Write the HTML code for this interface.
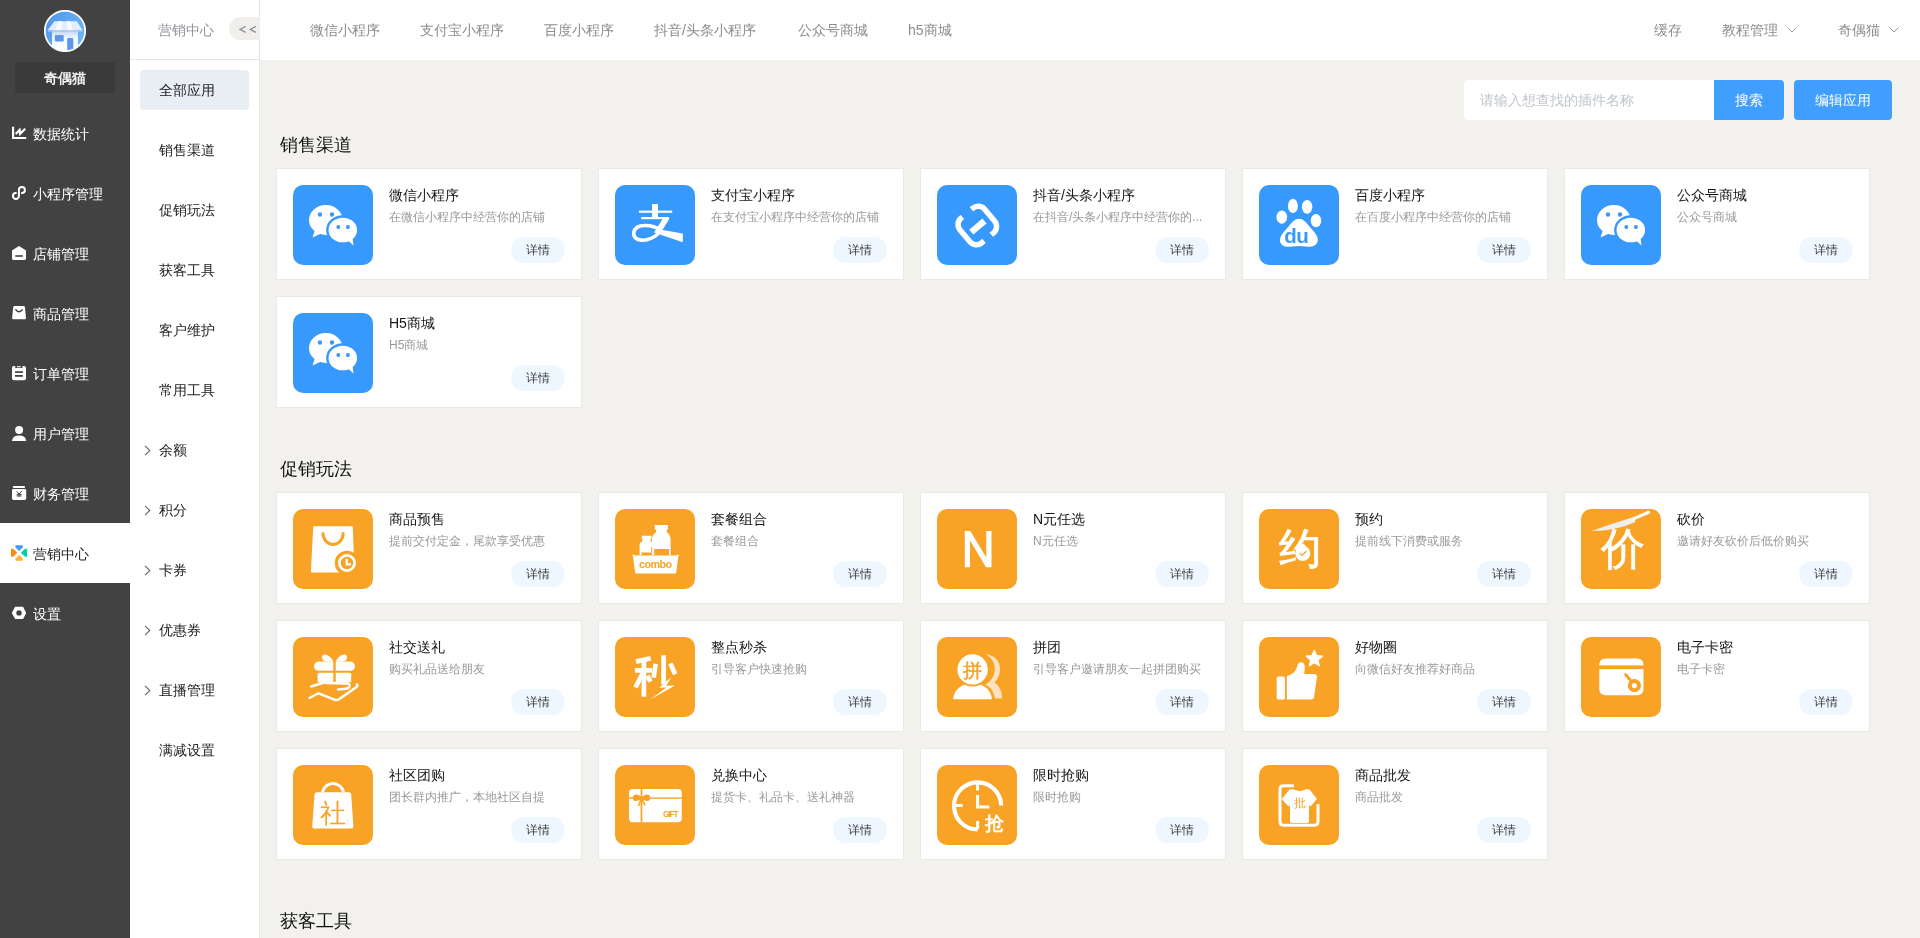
<!DOCTYPE html>
<html><head><meta charset="utf-8"><title>营销中心</title>
<style>
*{box-sizing:border-box;margin:0;padding:0}
html,body{width:1920px;height:938px;overflow:hidden;background:#f2f1ee;font-family:"Liberation Sans",sans-serif;font-size:14px;color:#333}
.abs{position:absolute}
#side1{position:absolute;left:0;top:0;width:130px;height:938px;background:#424242}
#avatar{position:absolute;left:44px;top:10px;width:42px;height:42px}
#uname{position:absolute;left:15px;top:62px;width:100px;height:31px;background:#3a3a3a;border-radius:3px;color:#f0f0f0;font-weight:bold;text-align:center;line-height:33px;font-size:14px}
.n1{position:absolute;left:0;width:130px;height:60px;color:#fff}
.n1.act{background:#fff;color:#222}
.n1i{position:absolute;left:12px;top:23px;width:14px;height:14px}
.n1.act .n1i{left:11px;top:22px}
.n1i svg{display:block}
.n1t{position:absolute;left:33px;top:1px;line-height:60px;font-size:14px;white-space:nowrap}
#side2{position:absolute;left:130px;top:0;width:130px;height:938px;background:#fff;border-right:1px solid #e6e6e6}
#s2head{position:absolute;left:0;top:0;width:129px;height:60px;border-bottom:1px solid #e6e6e6}
#s2title{position:absolute;left:28px;top:0;line-height:60px;color:#909399;font-size:14px}
#collapse{position:absolute;left:99px;top:17px;width:40px;height:23px;border-radius:12px 0 0 12px;background:#f0efec;color:#999;font-size:13px;line-height:23px;padding-left:8px;letter-spacing:3px;font-family:"Liberation Mono",monospace}
#allapp{position:absolute;left:10px;top:70px;width:109px;height:40px;background:#e9edf4;border-radius:4px;line-height:40px;padding-left:19px;color:#222}
.n2{position:absolute;left:0;width:129px;height:20px;line-height:20px;color:#222}
.n2 span{position:absolute;left:29px;top:0;white-space:nowrap}
.n2 .arr{position:absolute;left:14px;top:5px}
#header{position:absolute;left:260px;top:0;width:1660px;height:60px;background:#fff}
.tab{position:absolute;top:0;line-height:60px;color:#8c8c8c;font-size:14px;white-space:nowrap}
.hr{position:absolute;top:0;line-height:60px;color:#8c8c8c;font-size:14px;white-space:nowrap}
.chev{position:absolute;top:27px}
#search{position:absolute;left:1464px;top:80px;width:250px;height:40px;background:#fff;border-radius:4px 0 0 4px;color:#c0c4cc;line-height:40px;padding-left:16px;font-size:14px}
#sbtn{position:absolute;left:1714px;top:80px;width:70px;height:40px;background:#409eff;border-radius:0 4px 4px 0;color:#fff;text-align:center;line-height:40px}
#ebtn{position:absolute;left:1794px;top:80px;width:98px;height:40px;background:#409eff;border-radius:4px;color:#fff;text-align:center;line-height:40px}
.sec{position:absolute;left:280px;font-size:18px;color:#111;line-height:24px;white-space:nowrap}
.card{position:absolute;width:306px;height:112px;background:#fff;border:1px solid #e8e9e9}
.card .ic{position:absolute;left:16px;top:16px;width:80px;height:80px;border-radius:10px;overflow:hidden}
.card .ic svg{display:block}
.card .t{position:absolute;left:112px;top:16px;line-height:20px;font-size:14px;color:#151515;white-space:nowrap}
.card .s{position:absolute;left:112px;top:38px;line-height:20px;font-size:12px;color:#999;white-space:nowrap}
.card .btn{position:absolute;left:234px;top:68px;width:54px;height:26px;border-radius:13px;background:#eef6ff;color:#3a3a3a;font-size:12px;line-height:26px;text-align:center}
</style></head><body><div id="root" style="position:absolute;left:0;top:0;width:1920px;height:938px;will-change:transform">
<div id="side1">
<div id="avatar"><svg width="42" height="42" viewBox="0 0 42 42"><defs><linearGradient id="avg" x1="0" y1="0" x2="1" y2="0.6"><stop offset="0" stop-color="#4f93ee"/><stop offset="1" stop-color="#6cb6f6"/></linearGradient><linearGradient id="bdg" x1="0" y1="0" x2="0" y2="1"><stop offset="0" stop-color="#b9d4f8"/><stop offset="0.35" stop-color="#f3f8ff"/><stop offset="1" stop-color="#ffffff"/></linearGradient><clipPath id="avc"><circle cx="21" cy="21" r="20"/></clipPath></defs>
<circle cx="21" cy="21" r="20.2" fill="url(#avg)"/>
<g clip-path="url(#avc)"><rect x="8" y="20.3" width="26" height="22" fill="url(#bdg)"/>
<path d="M10.4 11.2 H32.8 L38.6 20.3 H3.7 Z" fill="#e3eefd"/>
<path d="M14.5 11.2 H18.6 L17.2 20.3 H11.3 Z M22.5 11.2 H26.6 L28.6 20.3 H23.5 Z" fill="#f7faff"/>
<path d="M3.7 20.3 H38.6 V22 H3.7 Z" fill="#a8c8f5" opacity="0.7"/>
<rect x="10.9" y="25" width="8.8" height="6.4" rx="1.2" fill="#5b97ee"/>
<rect x="23.2" y="28" width="6.1" height="14" rx="1" fill="#5b97ee"/></g>
<circle cx="21" cy="21" r="20.2" fill="none" stroke="#fff" stroke-width="1.7"/></svg></div>
<div id="uname">奇偶猫</div>
<div class="n1" style="top:103px"><span class="n1i"><svg width="14" height="14" viewBox="0 0 14 14" style="overflow:visible"><path d="M1.1 0.8 V12 H14.2" fill="none" stroke="#fff" stroke-width="2.2"/><path d="M3.7 7.9 L7.6 3.9 L8.1 7.8 L13.2 2.7" fill="none" stroke="#fff" stroke-width="2.2" stroke-linejoin="miter"/></svg></span><span class="n1t">数据统计</span></div>
<div class="n1" style="top:163px"><span class="n1i"><svg width="14" height="14" viewBox="0 0 14 14" style="overflow:visible"><path d="M3.9 6.9 A3 3 0 1 0 6.9 9.9 V4 A3 3 0 1 1 9.9 7" fill="none" stroke="#fff" stroke-width="2" stroke-linecap="round"/></svg></span><span class="n1t">小程序管理</span></div>
<div class="n1" style="top:223px"><span class="n1i"><svg width="14" height="14" viewBox="0 0 14 14" style="overflow:visible"><path d="M7 0 L14 4.4 V12.6 Q14 14 12.6 14 H1.4 Q0 14 0 12.6 V4.4 Z" fill="#fff"/><rect x="3.3" y="9.2" width="7.5" height="1.6" fill="#424242"/></svg></span><span class="n1t">店铺管理</span></div>
<div class="n1" style="top:283px"><span class="n1i"><svg width="14" height="14" viewBox="0 0 14 14" style="overflow:visible"><path d="M2.5 0 H11.6 Q12.8 0 12.9 1.2 L14 12 Q14.1 13.2 12.8 13.2 H1.3 Q0 13.2 0.1 12 L1.2 1.2 Q1.3 0 2.5 0 Z" fill="#fff"/><path d="M3.4 3.4 Q7 8.2 10.6 3.4" fill="none" stroke="#424242" stroke-width="1.5"/></svg></span><span class="n1t">商品管理</span></div>
<div class="n1" style="top:343px"><span class="n1i"><svg width="14" height="14" viewBox="0 0 14 14" style="overflow:visible"><rect x="0" y="0" width="14" height="14.3" rx="2" fill="#fff"/><rect x="3.2" y="-0.3" width="7.3" height="2.4" rx="0.6" fill="#424242"/><rect x="4.9" y="0.2" width="3.9" height="1.1" fill="#fff"/><rect x="3" y="5.2" width="7.9" height="1.7" fill="#424242"/><rect x="3" y="9" width="7.9" height="1.8" fill="#424242"/></svg></span><span class="n1t">订单管理</span></div>
<div class="n1" style="top:403px"><span class="n1i"><svg width="14" height="14" viewBox="0 0 14 14" style="overflow:visible"><circle cx="7.1" cy="3.9" r="4" fill="#fff"/><path d="M0 15 Q0.6 9.6 7.1 9.6 Q13.6 9.6 14.2 15 Z" fill="#fff"/></svg></span><span class="n1t">用户管理</span></div>
<div class="n1" style="top:463px"><span class="n1i"><svg width="14" height="14" viewBox="0 0 14 14" style="overflow:visible"><rect x="0.9" y="0" width="12.1" height="2" rx="0.8" fill="#fff"/><rect x="0" y="2.9" width="14.2" height="11.1" rx="1.4" fill="#fff"/><path d="M4.7 5.4 L7.1 8 L9.5 5.4 M7.1 8 V10.9 M4.6 8.3 H9.6 M4.6 9.9 H9.6" fill="none" stroke="#424242" stroke-width="1"/></svg></span><span class="n1t">财务管理</span></div>
<div class="n1 act" style="top:523px"><span class="n1i"><svg width="16" height="16" viewBox="0 0 16 16" style="overflow:visible"><g stroke-linejoin="round" stroke-width="1.5"><path d="M5.1 1 H11.1 V2 L8.1 5.1 L5.1 2 Z" fill="#3d9bfb" stroke="#3d9bfb"/><path d="M0.8 4.6 H1.9 L5.3 7.8 L1.9 11 H0.8 Z" fill="#ff8a00" stroke="#ff8a00"/><path d="M15.4 4.6 H14.3 L10.9 7.8 L14.3 11 H15.4 Z" fill="#00d0a6" stroke="#00d0a6"/><path d="M5.1 15 H11.1 V14 L8.1 10.9 L5.1 14 Z" fill="#ffb13a" stroke="#ffb13a"/></g></svg></span><span class="n1t">营销中心</span></div>
<div class="n1" style="top:583px"><span class="n1i"><svg width="14" height="14" viewBox="0 0 14 14" style="overflow:visible"><path fill-rule="evenodd" d="M3.1 0.8 H11.1 L14.2 6.9 L11.1 12.9 H3.1 L-0.2 6.9 Z M7 4.2 A2.7 2.7 0 1 0 7 9.6 A2.7 2.7 0 1 0 7 4.2 Z" fill="#fff"/></svg></span><span class="n1t">设置</span></div>
</div>
<div id="side2">
<div id="s2head"><div id="s2title">营销中心</div><div id="collapse"><svg width="40" height="23" viewBox="0 0 40 23" style="position:absolute;left:0;top:0"><path d="M16.6 9.4 L11 12.4 L16.6 15.4 M26.8 9.4 L21.2 12.4 L26.8 15.4" fill="none" stroke="#8f9196" stroke-width="1.2"/></svg></div></div>
<div id="allapp">全部应用</div>
<div class="n2" style="top:140px"><span>销售渠道</span></div>
<div class="n2" style="top:200px"><span>促销玩法</span></div>
<div class="n2" style="top:260px"><span>获客工具</span></div>
<div class="n2" style="top:320px"><span>客户维护</span></div>
<div class="n2" style="top:380px"><span>常用工具</span></div>
<div class="n2" style="top:440px"><svg class="arr" width="7" height="11" viewBox="0 0 7 11"><path d="M1 0.8 L5.8 5.5 L1 10.2" fill="none" stroke="#666" stroke-width="1.1"/></svg><span>余额</span></div>
<div class="n2" style="top:500px"><svg class="arr" width="7" height="11" viewBox="0 0 7 11"><path d="M1 0.8 L5.8 5.5 L1 10.2" fill="none" stroke="#666" stroke-width="1.1"/></svg><span>积分</span></div>
<div class="n2" style="top:560px"><svg class="arr" width="7" height="11" viewBox="0 0 7 11"><path d="M1 0.8 L5.8 5.5 L1 10.2" fill="none" stroke="#666" stroke-width="1.1"/></svg><span>卡券</span></div>
<div class="n2" style="top:620px"><svg class="arr" width="7" height="11" viewBox="0 0 7 11"><path d="M1 0.8 L5.8 5.5 L1 10.2" fill="none" stroke="#666" stroke-width="1.1"/></svg><span>优惠券</span></div>
<div class="n2" style="top:680px"><svg class="arr" width="7" height="11" viewBox="0 0 7 11"><path d="M1 0.8 L5.8 5.5 L1 10.2" fill="none" stroke="#666" stroke-width="1.1"/></svg><span>直播管理</span></div>
<div class="n2" style="top:740px"><span>满减设置</span></div>
</div>
<div id="header"></div>
<div class="tab" style="left:310px">微信小程序</div><div class="tab" style="left:420px">支付宝小程序</div><div class="tab" style="left:544px">百度小程序</div><div class="tab" style="left:654px">抖音/头条小程序</div><div class="tab" style="left:798px">公众号商城</div><div class="tab" style="left:908px">h5商城</div>
<div class="hr" style="left:1654px">缓存</div>
<div class="hr" style="left:1722px">教程管理</div>
<svg class="chev" style="left:1787px" width="10" height="6" viewBox="0 0 10 6"><path d="M0.5 0.5 L5 5 L9.5 0.5" fill="none" stroke="#999" stroke-width="1"/></svg>
<div class="hr" style="left:1838px">奇偶猫</div>
<svg class="chev" style="left:1889px" width="10" height="6" viewBox="0 0 10 6"><path d="M0.5 0.5 L5 5 L9.5 0.5" fill="none" stroke="#999" stroke-width="1"/></svg>
<div id="search">请输入想查找的插件名称</div>
<div id="sbtn">搜索</div>
<div id="ebtn">编辑应用</div>
<div class="sec" style="top:133px">销售渠道</div>
<div class="card" style="left:276px;top:168px"><div class="ic" style="background:#3899fd"><svg width="80" height="80" viewBox="0 0 80 80"><ellipse cx="32.8" cy="35" rx="16.8" ry="15" fill="#fff"/><path d="M22 45 L19.5 52.5 L29 48 Z" fill="#fff"/>
<circle cx="27" cy="29.5" r="2.2" fill="#3899fd"/><circle cx="39" cy="29.5" r="2.2" fill="#3899fd"/>
<ellipse cx="49.8" cy="45" rx="15.5" ry="13.5" fill="#fff" stroke="#3899fd" stroke-width="2.4"/><path d="M55 55.5 L60.5 60.5 L59.5 53 Z" fill="#fff"/>
<circle cx="45.3" cy="42" r="2" fill="#3899fd"/><circle cx="54.9" cy="42" r="2" fill="#3899fd"/></svg></div><div class="t">微信小程序</div><div class="s">在微信小程序中经营你的店铺</div><div class="btn">详情</div></div>
<div class="card" style="left:598px;top:168px"><div class="ic" style="background:#3899fd"><svg width="80" height="80" viewBox="0 0 80 80"><g fill="#fff"><rect x="24" y="25.6" width="33.2" height="2.2"/><rect x="37" y="19" width="6" height="13"/><rect x="26.2" y="32" width="27.8" height="2.2"/>
<path d="M48 33.5 H54.5 L45 49 L39 47.5 Z"/><path d="M47.6 44.9 L67.8 48.6 L67.8 57.2 L41.2 48.3 Z"/></g>
<path d="M46 45.5 C38 39.5 20.5 37.5 18.8 47.5 C17.5 56.5 32 58.5 43.5 48.5" fill="none" stroke="#fff" stroke-width="3.6"/></svg></div><div class="t">支付宝小程序</div><div class="s">在支付宝小程序中经营你的店铺</div><div class="btn">详情</div></div>
<div class="card" style="left:920px;top:168px"><div class="ic" style="background:#3899fd"><svg width="80" height="80" viewBox="0 0 80 80"><g transform="translate(40.3 40.5) scale(1.19) translate(-40 -40) rotate(-40 40 40)" fill="none" stroke="#fff" stroke-width="4.6">
<path d="M35 26.5 H33.5 A7 7 0 0 0 26.5 33.5 V46.5 A7 7 0 0 0 33.5 53.5 H36"/>
<path d="M45 26.5 H46.5 A7 7 0 0 1 53.5 33.5 V46.5 A7 7 0 0 1 46.5 53.5 H44"/>
<path d="M32.5 41 H47" stroke-width="5.4"/></g></svg></div><div class="t">抖音/头条小程序</div><div class="s">在抖音/头条小程序中经营你的...</div><div class="btn">详情</div></div>
<div class="card" style="left:1242px;top:168px"><div class="ic" style="background:#3899fd"><svg width="80" height="80" viewBox="0 0 80 80"><g fill="#fff"><ellipse cx="22.8" cy="32.1" rx="5.3" ry="6.6"/><ellipse cx="33.9" cy="20.9" rx="5" ry="7.1"/><ellipse cx="48.1" cy="21.8" rx="5.3" ry="6.9"/><ellipse cx="57" cy="35.6" rx="5.3" ry="6.6"/>
<path d="M40 33.7 C44 33.7 47 37 50 41 C54 46 59 50 58.8 55 C58.6 61 52 62.5 47 61.5 C43 60.8 37 60.8 33 61.5 C27 62.5 21 61 20.9 55 C21 50 26 46 30 41 C33 37 36 33.7 40 33.7 Z"/></g>
<text x="25.2" y="57.5" font-family="Liberation Sans" font-weight="bold" font-size="20.5" fill="#3899fd" letter-spacing="-0.5">du</text></svg></div><div class="t">百度小程序</div><div class="s">在百度小程序中经营你的店铺</div><div class="btn">详情</div></div>
<div class="card" style="left:1564px;top:168px"><div class="ic" style="background:#3899fd"><svg width="80" height="80" viewBox="0 0 80 80"><ellipse cx="32.8" cy="35" rx="16.8" ry="15" fill="#fff"/><path d="M22 45 L19.5 52.5 L29 48 Z" fill="#fff"/>
<circle cx="27" cy="29.5" r="2.2" fill="#3899fd"/><circle cx="39" cy="29.5" r="2.2" fill="#3899fd"/>
<ellipse cx="49.8" cy="45" rx="15.5" ry="13.5" fill="#fff" stroke="#3899fd" stroke-width="2.4"/><path d="M55 55.5 L60.5 60.5 L59.5 53 Z" fill="#fff"/>
<circle cx="45.3" cy="42" r="2" fill="#3899fd"/><circle cx="54.9" cy="42" r="2" fill="#3899fd"/></svg></div><div class="t">公众号商城</div><div class="s">公众号商城</div><div class="btn">详情</div></div>
<div class="card" style="left:276px;top:296px"><div class="ic" style="background:#3899fd"><svg width="80" height="80" viewBox="0 0 80 80"><ellipse cx="32.8" cy="35" rx="16.8" ry="15" fill="#fff"/><path d="M22 45 L19.5 52.5 L29 48 Z" fill="#fff"/>
<circle cx="27" cy="29.5" r="2.2" fill="#3899fd"/><circle cx="39" cy="29.5" r="2.2" fill="#3899fd"/>
<ellipse cx="49.8" cy="45" rx="15.5" ry="13.5" fill="#fff" stroke="#3899fd" stroke-width="2.4"/><path d="M55 55.5 L60.5 60.5 L59.5 53 Z" fill="#fff"/>
<circle cx="45.3" cy="42" r="2" fill="#3899fd"/><circle cx="54.9" cy="42" r="2" fill="#3899fd"/></svg></div><div class="t">H5商城</div><div class="s">H5商城</div><div class="btn">详情</div></div>
<div class="sec" style="top:457px">促销玩法</div>
<div class="card" style="left:276px;top:492px"><div class="ic" style="background:#f8a325"><svg width="80" height="80" viewBox="0 0 80 80"><path d="M21 17.2 H59.2 Q59.8 17.2 59.8 18 L61.4 62.8 Q61.4 63.6 60.6 63.6 H18.7 Q17.9 63.6 17.9 62.8 L20.2 18 Q20.2 17.2 21 17.2 Z" fill="#fff"/>
<path d="M30 24.6 A10.1 10.8 0 0 0 50.2 24.6" fill="none" stroke="#f8a325" stroke-width="3" stroke-linecap="round"/>
<circle cx="54" cy="54" r="12.3" fill="#f8a325"/><circle cx="54" cy="54" r="7.6" fill="none" stroke="#fff" stroke-width="2.8"/>
<path d="M53.8 49.8 V55.4 H58" fill="none" stroke="#fff" stroke-width="2.2"/></svg></div><div class="t">商品预售</div><div class="s">提前交付定金，尾款享受优惠</div><div class="btn">详情</div></div>
<div class="card" style="left:598px;top:492px"><div class="ic" style="background:#f8a325"><svg width="80" height="80" viewBox="0 0 80 80"><g fill="#fff">
<path d="M39.8 16.1 H52.9 V20.4 H51.8 V23 Q55.6 26 55.6 31 V46 H36.9 V31 Q36.9 26 41.2 23 V20.4 H39.8 Z"/>
<path d="M26.8 26.8 H36.4 V30 H35.6 V32 Q38 33.5 38 36 V46 H24.6 V36 Q24.6 33.5 27.4 32 V30 H26.8 Z"/>
<path d="M17.6 45.2 L20 46.5 H61 L63.6 45.2 L61.2 63.4 Q61 64.6 59.8 64.6 H21.6 Q20.4 64.6 20.2 63.4 Z"/></g>
<rect x="39.2" y="40" width="14.8" height="6" fill="#f8a325"/><rect x="26.5" y="43.5" width="9.5" height="2.5" fill="#f8a325"/>
<rect x="36.2" y="38" width="0.9" height="8" fill="#f8a325"/>
<text x="24" y="59.3" font-family="Liberation Sans" font-weight="bold" font-size="10.8" fill="#f8a325" textLength="33">combo</text></svg></div><div class="t">套餐组合</div><div class="s">套餐组合</div><div class="btn">详情</div></div>
<div class="card" style="left:920px;top:492px"><div class="ic" style="background:#f8a325"><svg width="80" height="80" viewBox="0 0 80 80"><path d="M27.8 58.2 V22 H33.3 L49.3 48.6 V22 H54.5 V58.2 H49 L33 31.6 V58.2 Z" fill="#fff"/></svg></div><div class="t">N元任选</div><div class="s">N元任选</div><div class="btn">详情</div></div>
<div class="card" style="left:1242px;top:492px"><div class="ic" style="background:#f8a325"><svg width="80" height="80" viewBox="0 0 80 80"><text x="20" y="53.8" font-size="42" fill="#fff" stroke="#fff" stroke-width="0.9" font-family="Liberation Sans">约</text>
<circle cx="43.8" cy="44.4" r="7.6" fill="#fff"/><path d="M40.6 44.2 L43.2 46.4 L47.4 42" fill="none" stroke="#f8a325" stroke-width="1.2"/></svg></div><div class="t">预约</div><div class="s">提前线下消费或服务</div><div class="btn">详情</div></div>
<div class="card" style="left:1564px;top:492px"><div class="ic" style="background:#f8a325"><svg width="80" height="80" viewBox="0 0 80 80"><text x="19.8" y="55.2" font-size="44" fill="#fff" stroke="#fff" stroke-width="0.6" font-family="Liberation Sans">价</text>
<path d="M10.8 22 Q30 15 52.9 8.1 L54.4 13 Q35 22 10.8 22 Z" fill="#efefef"/>
<path d="M53 9.6 L67.6 3.3" stroke="#fff" stroke-width="3.2" stroke-linecap="round"/></svg></div><div class="t">砍价</div><div class="s">邀请好友砍价后低价购买</div><div class="btn">详情</div></div>
<div class="card" style="left:276px;top:620px"><div class="ic" style="background:#f8a325"><svg width="80" height="80" viewBox="0 0 80 80"><g fill="#fff">
<path d="M40.5 24.6 C38 19 30 14.5 29 20 C28.5 23 32 24.6 34 24.6 Z"/><path d="M42.5 24.6 C45 19 53 14.5 54 20 C54.5 23 51 24.6 49 24.6 Z"/>
<rect x="21" y="24.6" width="41" height="9.1" rx="4.5"/><rect x="24.6" y="35.8" width="33.6" height="9.6" rx="1.5"/></g>
<rect x="40.3" y="24" width="2.4" height="22" fill="#f8a325"/>
<g fill="none" stroke="#fff" stroke-width="2.5" stroke-linecap="round" stroke-linejoin="round">
<path d="M18 49.5 L29.5 46 Q31 45.6 33 46 L54 46.5 Q58 47 56 50.5 L53 51.8 L45 52.5"/>
<path d="M16.5 61 L24 57 Q25.5 56.3 27 56.8 L42 62.8 Q44 63.4 46 62.2 L63.5 50 Q65.2 48.5 64 47.3"/></g></svg></div><div class="t">社交送礼</div><div class="s">购买礼品送给朋友</div><div class="btn">详情</div></div>
<div class="card" style="left:598px;top:620px"><div class="ic" style="background:#f8a325"><svg width="80" height="80" viewBox="0 0 80 80"><g stroke="#fff" stroke-width="4.7" fill="none" stroke-linecap="butt">
<path d="M21 24.6 L35.8 21.2"/><path d="M19.9 33.4 H36.9"/><path d="M28.9 23 V59.8"/><path d="M27.5 36.5 L20.5 50.5"/><path d="M32.2 38.6 L35.6 44.6"/>
<path d="M48.6 18.3 V47.2"/><path d="M40.6 26.8 L38.6 40.6"/><path d="M55.4 26.4 L60.2 37.2"/></g>
<path d="M56.5 40 L44.2 50.8 L51.5 50.6 L34.8 62.8 L60 48.4 L51.2 48.8 Z" fill="#fff"/></svg></div><div class="t">整点秒杀</div><div class="s">引导客户快速抢购</div><div class="btn">详情</div></div>
<div class="card" style="left:920px;top:620px"><div class="ic" style="background:#f8a325"><svg width="80" height="80" viewBox="0 0 80 80"><path d="M48.5 17.3 C59 17.8 65 27 62.5 36.5 C61.5 40.5 59.5 43.5 57.5 45.5 C62.5 48.5 64.8 54.5 65 60 L64.5 61.5 H58 C56.5 53 52 49 48 47.8 C55 44 59 37 57.5 29 C56.5 23.5 53 19.5 48.5 17.3 Z" fill="#fde3bd"/>
<path d="M16.1 62.2 C17 52.5 25 46.3 35.5 46.3 C46 46.3 54 52.5 55 62.2 Z" fill="#fff"/>
<circle cx="35.6" cy="32.4" r="16.2" fill="#fff" stroke="#f8a325" stroke-width="2"/>
<text x="26" y="39.5" font-size="19" fill="#f8a325" stroke="#f8a325" stroke-width="0.5" font-family="Liberation Sans">拼</text></svg></div><div class="t">拼团</div><div class="s">引导客户邀请朋友一起拼团购买</div><div class="btn">详情</div></div>
<div class="card" style="left:1242px;top:620px"><div class="ic" style="background:#f8a325"><svg width="80" height="80" viewBox="0 0 80 80"><g fill="#fff"><rect x="17.7" y="39.6" width="8.2" height="23" rx="1.5"/>
<path d="M27.8 39 Q36 37 38 30 Q38.5 25.5 42 25.2 Q45.5 25.3 45.8 30 L45.3 37 H56 Q58.5 37.5 57.8 41 L55 60.5 Q54.4 62.6 52 62.6 H27.8 Z"/>
<path d="M55.3 13.2 L57.6 18.6 L63.4 19.2 L59 23.1 L60.3 28.8 L55.3 25.8 L50.3 28.8 L51.6 23.1 L47.2 19.2 L53 18.6 Z" stroke="#fff" stroke-width="1.2" stroke-linejoin="round"/></g></svg></div><div class="t">好物圈</div><div class="s">向微信好友推荐好商品</div><div class="btn">详情</div></div>
<div class="card" style="left:1564px;top:620px"><div class="ic" style="background:#f8a325"><svg width="80" height="80" viewBox="0 0 80 80"><rect x="18.3" y="21.4" width="44.2" height="36.8" rx="6" fill="#fff"/><rect x="17" y="28.4" width="47" height="3.7" fill="#f8a325"/>
<path d="M43.8 36.5 L50.5 44.5" stroke="#f8a325" stroke-width="2.6"/><path d="M44.5 40 L47 38 M46.5 42.5 L49 40.5" stroke="#f8a325" stroke-width="2.2"/>
<circle cx="53.4" cy="48.6" r="4.6" fill="none" stroke="#f8a325" stroke-width="4"/></svg></div><div class="t">电子卡密</div><div class="s">电子卡密</div><div class="btn">详情</div></div>
<div class="card" style="left:276px;top:748px"><div class="ic" style="background:#f8a325"><svg width="80" height="80" viewBox="0 0 80 80"><path d="M29.4 27 A11 11.5 0 0 1 50.6 27" fill="none" stroke="#fff" stroke-width="3"/>
<path d="M24 27.3 H55.8 Q58 27.3 58.2 29.5 L60.4 61.2 Q60.5 63.6 58 63.6 H21.7 Q19.2 63.6 19.3 61.2 L21.5 29.5 Q21.7 27.3 24 27.3 Z" fill="#fff"/>
<text x="27.2" y="56.5" font-size="26" fill="#f8a325" font-family="Liberation Sans">社</text></svg></div><div class="t">社区团购</div><div class="s">团长群内推广，本地社区自提</div><div class="btn">详情</div></div>
<div class="card" style="left:598px;top:748px"><div class="ic" style="background:#f8a325"><svg width="80" height="80" viewBox="0 0 80 80"><rect x="14" y="24.1" width="52.8" height="33.1" rx="4" fill="#fff"/>
<rect x="25.6" y="24" width="1.7" height="33.4" fill="#f8a325"/><rect x="14" y="32.4" width="52.8" height="1.4" fill="#f8a325"/>
<path d="M26.5 33 C23 29 18 29.5 18.5 33 C19 36 23 36 26.5 33 C30 29.5 35 29.5 34.5 33 C34 36 30 36 26.5 33 L23.5 41 M26.5 33 L30 40.5" fill="#f8a325" stroke="#f8a325" stroke-width="1.6"/>
<text x="48" y="52.4" font-size="8.2" font-weight="bold" fill="#f8a325" font-family="Liberation Sans" textLength="15.6">GIFT</text></svg></div><div class="t">兑换中心</div><div class="s">提货卡、礼品卡、送礼神器</div><div class="btn">详情</div></div>
<div class="card" style="left:920px;top:748px"><div class="ic" style="background:#f8a325"><svg width="80" height="80" viewBox="0 0 80 80"><path d="M40.6 64.5 A23.6 23.6 0 1 1 64.2 40.5" fill="none" stroke="#fff" stroke-width="4.2"/>
<g stroke="#fff" stroke-width="3" fill="none"><path d="M40.6 19 V25.5 M19 40.6 H25.5 M40.6 56 V64 M40.6 30 V42 H52.5"/></g>
<text x="47.5" y="64.5" font-size="19" fill="#fff" stroke="#fff" stroke-width="0.7" font-family="Liberation Sans">抢</text></svg></div><div class="t">限时抢购</div><div class="s">限时抢购</div><div class="btn">详情</div></div>
<div class="card" style="left:1242px;top:748px"><div class="ic" style="background:#f8a325"><svg width="80" height="80" viewBox="0 0 80 80"><path d="M35 20.8 H24.5 Q21 20.8 21 24.3 V56.6 Q21 60.3 24.5 60.3 H55.5 Q59 60.3 59 56.6 V39" fill="none" stroke="#fff" stroke-width="3"/>
<path d="M34 24.3 Q40.6 27.5 47 24.3 L50.5 24.6 L58 34 L51.5 41.5 L50 40 V56 Q50 58 48 58 H33 Q31 58 31 56 V40 L29.5 41.5 L22.8 34 L30.5 24.6 Z" fill="#fff"/>
<text x="34.5" y="42" font-size="11.5" fill="#f8a325" font-family="Liberation Sans">批</text></svg></div><div class="t">商品批发</div><div class="s">商品批发</div><div class="btn">详情</div></div>
<div class="sec" style="top:909px">获客工具</div>
</div></body></html>
